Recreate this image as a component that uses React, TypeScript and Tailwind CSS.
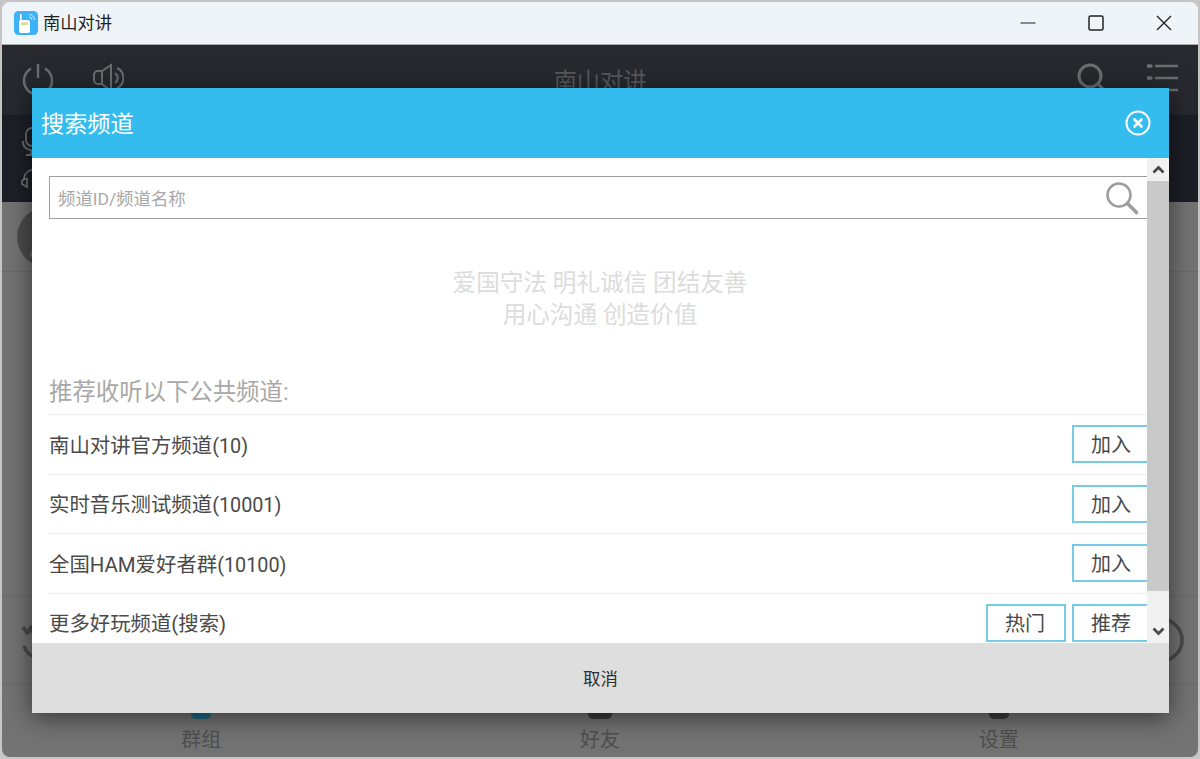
import React from 'react';

const font = { fontFamily: 'Roboto, "Noto Sans CJK SC", sans-serif' };

function AppLogo() {
  return (
    <svg width="24" height="24" viewBox="0 0 24 24" className="shrink-0">
      <rect x="0" y="0" width="24" height="24" rx="4.5" fill="#3fb1fb" />
      <rect x="5" y="9" width="11" height="13" rx="2" fill="#fff" />
      <rect x="6" y="3" width="1.6" height="7" fill="#fff" />
      <rect x="7" y="11.5" width="7" height="2.4" fill="#d6d98a" />
      <path d="M15 6a3 3 0 0 1 3 3M15 3.5a5.5 5.5 0 0 1 5.5 5.5" fill="none" stroke="#d5eeff" strokeWidth="1" />
    </svg>
  );
}

function TitleBar() {
  return (
    <div className="h-[43px] shrink-0 flex items-center bg-[#eff4f9] border-b border-[#a9abad] pl-[12px]">
      <AppLogo />
      <span className="ml-[5px] pt-[2px] text-[17.3px] text-[#1f1f1f]">南山对讲</span>
      <div className="ml-auto flex items-center text-[#222]">
        <svg width="16" height="16" viewBox="0 0 16 16" className="mr-[52px]"><path d="M0.5 8h15" stroke="currentColor" strokeWidth="1.2" /></svg>
        <svg width="16" height="16" viewBox="0 0 16 16" className="mr-[52px]"><rect x="1" y="1" width="14" height="14" rx="1.5" fill="none" stroke="currentColor" strokeWidth="1.5" /></svg>
        <svg width="16" height="16" viewBox="0 0 16 16" className="mr-[26px]"><path d="M1 1l14 14M15 1L1 15" stroke="currentColor" strokeWidth="1.4" /></svg>
      </div>
    </div>
  );
}

function AppHeader() {
  return (
    <div className="h-[70px] shrink-0 flex items-start bg-[#27292f] pt-[17px] pl-[20px] pr-[19px] text-[#6d6e70]">
      <svg width="32" height="32" viewBox="0 0 32 32" fill="none" stroke="currentColor" strokeWidth="2.4">
        <path d="M9 6.5a14 14 0 1 0 14 0M16 2v14" />
      </svg>
      <svg width="32" height="32" viewBox="0 0 32 32" fill="none" stroke="currentColor" strokeWidth="2" className="ml-[38px]">
        <path d="M10 9H6a4 4 0 0 0-4 4v5a4 4 0 0 0 4 4h4zM10 9l9-6v26l-9-7M23 11a6 6 0 0 1 0 10M25 6a11 11 0 0 1 0 20" />
      </svg>
      <div className="flex-1 pt-[1px] text-center text-[23.2px] leading-[36px] text-[#57595c]">南山对讲</div>
      <svg width="32" height="32" viewBox="0 0 32 32" fill="none" stroke="currentColor" strokeWidth="3">
        <circle cx="14" cy="14" r="11" /><path d="M22 22l7 7" />
      </svg>
      <svg width="32" height="32" viewBox="0 0 32 32" fill="none" stroke="currentColor" strokeWidth="2.5" className="ml-[39px]">
        <path d="M8 4h23M8 16h23M8 28h23" /><path d="M1 4h3M1 16h3M1 28h3" strokeLinecap="round" strokeWidth="3.5" />
      </svg>
    </div>
  );
}

function StatusBar() {
  return (
    <div className="h-[87px] shrink-0 flex flex-col gap-[8px] bg-[#1d1f27] pl-[19px] pt-[10px] text-[#6d6e70]">
      <svg width="18" height="32" viewBox="0 0 18 32" fill="none" stroke="currentColor" strokeWidth="1.8">
        <rect x="5" y="3" width="12" height="18" rx="6" /><path d="M2 16a8 8 0 0 0 8 9v5M5 30h10" />
      </svg>
      <svg width="18" height="26" viewBox="0 0 18 26" fill="none" stroke="currentColor" strokeWidth="1.8">
        <path d="M3 14a10 10 0 0 1 15-8" /><path d="M3 14l-2 2v3l5 3v-8z" />
      </svg>
    </div>
  );
}

function MainArea() {
  return (
    <div className="flex-1 flex flex-col bg-[#737373] min-h-0">
      <div className="h-[70px] shrink-0 flex items-center pl-[15px] border-b border-[#6a6a6a]">
        <svg width="60" height="60" viewBox="0 0 60 60">
          <circle cx="30" cy="30" r="30" fill="#4c4c4c" />
          <circle cx="30" cy="27" r="9" fill="none" stroke="#6a6a6a" strokeWidth="3" />
          <path d="M14 50a16 16 0 0 1 10-14" fill="none" stroke="#6a6a6a" strokeWidth="3" />
        </svg>
      </div>
      <div className="flex-1" />
      <div className="h-[90px] shrink-0 flex items-center justify-between border-y border-[#6a6a6a] pl-[18px] pr-[14px] text-[#4a4a4a]">
        <svg width="40" height="44" viewBox="0 0 40 44" fill="none" stroke="currentColor" strokeWidth="3.5">
          <path d="M22 5a18 18 0 0 0-14 8M3 9l4 6 6-4" />
          <path d="M4 28a18 18 0 0 0 14 12" />
        </svg>
        <svg width="46" height="46" viewBox="0 0 46 46" fill="none" stroke="currentColor" strokeWidth="3.5">
          <circle cx="23" cy="23" r="21" />
        </svg>
      </div>
      <div className="h-[72px] shrink-0 grid grid-cols-3 text-[20px] text-[#4f4f4f]">
        <div className="flex flex-col items-center">
          <div className="h-[10px] w-[20px] mt-[24px] rounded-b-[5px] bg-[#1f6a86]" />
          <span className="mt-[6px] leading-[30px]">群组</span>
        </div>
        <div className="flex flex-col items-center">
          <div className="h-[10px] w-[24px] mt-[24px] rounded-b-[5px] bg-[#3d3d3d]" />
          <span className="mt-[6px] leading-[30px]">好友</span>
        </div>
        <div className="flex flex-col items-center">
          <div className="h-[10px] w-[20px] mt-[24px] rounded-b-[5px] bg-[#3d3d3d]" />
          <span className="mt-[6px] leading-[30px]">设置</span>
        </div>
      </div>
    </div>
  );
}

function ChannelButton({ label }: { label: string }) {
  return (
    <button className="w-[80px] h-[38px] shrink-0 border-2 border-[#76cbe6] bg-white pt-[2px] pr-[2px] text-[20px] text-[#4a4a4a] leading-none">
      {label}
    </button>
  );
}

const rows = [
  { name: '南山对讲官方频道', id: '(10)', actions: ['加入'] },
  { name: '实时音乐测试频道', id: '(10001)', actions: ['加入'] },
  { name: '全国HAM爱好者群', id: '(10100)', actions: ['加入'] },
  { name: '更多好玩频道(搜索)', id: '', actions: ['热门', '推荐'] },
];

function SearchDialog() {
  return (
    <div className="absolute left-[32px] top-[88px] w-[1137px] h-[625px] flex flex-col bg-white shadow-[0_4px_24px_rgba(0,0,0,0.55)]">
      <div className="h-[70px] shrink-0 flex items-center justify-between bg-[#35bcef] pl-[9px] pr-[18px]">
        <span className="pt-[2px] text-[23.2px] text-white">搜索频道</span>
        <svg width="26" height="26" viewBox="0 0 26 26" fill="none" stroke="#fff">
          <circle cx="13" cy="13" r="11.5" strokeWidth="2" />
          <path d="M9.5 9.5l7 7M16.5 9.5l-7 7" strokeWidth="2.6" strokeLinecap="round" />
        </svg>
      </div>

      <div className="flex-1 flex min-h-0">
        <div className="flex-1 min-w-0 overflow-hidden pl-[17px] pt-[18px]">
          <div className="h-[43px] flex items-center justify-between border border-r-0 border-[#9f9f9f] pl-[8px] pr-[8px]">
            <span className="pt-[3px] text-[17.4px] text-[#a8a8a8]">频道ID/频道名称</span>
            <svg width="34" height="34" viewBox="0 0 34 34" fill="none" stroke="#9c9c9c">
              <circle cx="14" cy="14" r="11.5" strokeWidth="2.5" />
              <path d="M22.5 22.5l9 9" strokeWidth="3.6" strokeLinecap="round" />
            </svg>
          </div>

          <div className="mt-[48px] pl-[4px] text-center text-[23.6px] leading-[32px] text-[#dcdcdc]">
            <div>爱国守法 明礼诚信 团结友善</div>
            <div>用心沟通 创造价值</div>
          </div>

          <div className="mt-[45px] h-[38px] text-[23.4px] leading-[32px] text-[#a8a8a8]">推荐收听以下公共频道:</div>

          {rows.map((row) => (
            <div key={row.name} className="h-[59.5px] flex items-center border-t border-[#eeeeee] -mr-[5px]">
              <span className="pt-[4px] text-[20.4px] text-[#4a4a4a]">
                {row.name}
                <span className="text-[19.8px]">{row.id}</span>
              </span>
              <div className="ml-auto flex gap-[6px]">
                {row.actions.map((a) => <ChannelButton key={a} label={a} />)}
              </div>
            </div>
          ))}
        </div>

        <div className="w-[22px] shrink-0 flex flex-col bg-[#f1f1f1]">
          <div className="h-[23px] flex items-center justify-center">
            <svg width="13" height="9" viewBox="0 0 13 9" fill="none" stroke="#4a4a4a" strokeWidth="2.8"><path d="M1.5 7.5L6.5 2.5l5 5" /></svg>
          </div>
          <div className="h-[410px] bg-[#c9c9c9]" />
          <div className="flex-1 flex items-end justify-center pb-[7px]">
            <svg width="13" height="9" viewBox="0 0 13 9" fill="none" stroke="#4a4a4a" strokeWidth="2.8"><path d="M1.5 1.5l5 5 5-5" /></svg>
          </div>
        </div>
      </div>

      <div className="h-[70px] shrink-0 flex items-center justify-center bg-[#dedede] pt-[2px] text-[17.4px] text-[#2e2e2e]">取消</div>
    </div>
  );
}

export default function App() {
  return (
    <div className="relative w-[1200px] h-[759px] overflow-hidden bg-[#c6c6c6] p-[2px]" style={font}>
      <div className="h-full flex flex-col rounded-[8px] overflow-hidden">
        <TitleBar />
        <AppHeader />
        <StatusBar />
        <MainArea />
      </div>
      <SearchDialog />
    </div>
  );
}
